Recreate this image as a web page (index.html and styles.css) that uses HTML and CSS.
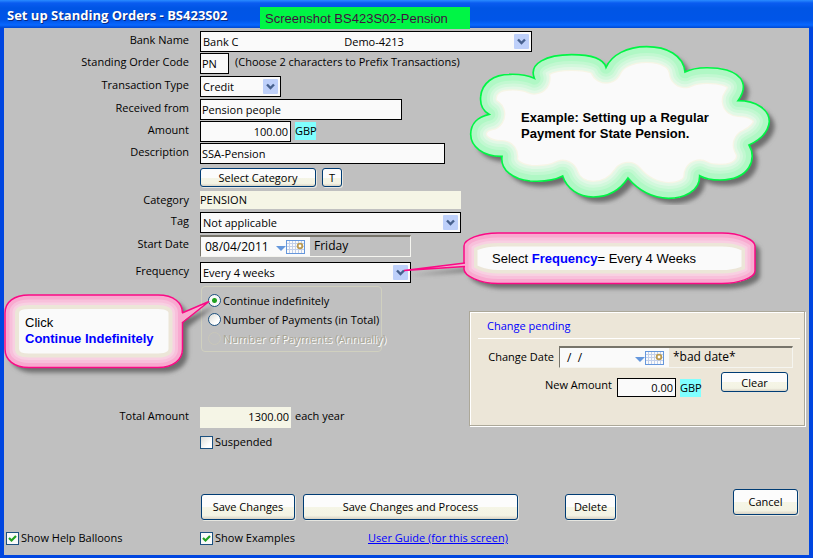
FILE: index.html
```html
<!DOCTYPE html>
<html lang="en">
<head>
<meta charset="utf-8">
<title>Set up Standing Orders</title>
<link rel="stylesheet" href="styles.css">
</head>
<body>
<svg class="defs" width="0" height="0" aria-hidden="true">
  <symbol id="chevron" viewBox="0 0 15 15">
    <rect width="15" height="15" rx="1" fill="#bed0fa"/>
    <path d="M4 5.500L7.500 9L11 5.500" fill="none" stroke="#47618e" stroke-width="2.400"/>
  </symbol>
  <symbol id="calendar" viewBox="0 0 30 14">
    <path d="M0 6h10L5 11z" fill="#6597dc"/>
    <rect x="10.500" y=".5" width="18" height="13" fill="#fafafa" stroke="#6597dc"/>
    <path d="M13.500 1v12M16.500 1v12M19.500 1v12M22.500 1v12M25.500 1v12M11 3.500h17M11 6.500h17M11 9.500h17" stroke="#c3d0ea"/>
    <circle cx="24" cy="6" r="2.300" fill="#fff" stroke="#bb9a50" stroke-width="1.800"/>
  </symbol>
</svg>
<div class="window">
  <header class="titlebar">
    <h1>Set up Standing Orders - BS423S02</h1>
    <span class="tag">Screenshot BS423S02-Pension</span>
  </header>

  <form class="form">
    <div class="row">
      <label for="bank">Bank Name</label>
      <span class="select bank"><select id="bank"><option>Bank C&nbsp;&nbsp;&nbsp;&nbsp;&nbsp;&nbsp;&nbsp;&nbsp;&nbsp;&nbsp;&nbsp;&nbsp;&nbsp;&nbsp;&nbsp;&nbsp;&nbsp;&nbsp;&nbsp;&nbsp;&nbsp;&nbsp;&nbsp;&nbsp;&nbsp;&nbsp;&nbsp;&nbsp;&nbsp;&nbsp;&nbsp;&nbsp;&nbsp;&nbsp;&nbsp;&nbsp;&nbsp;Demo-4213</option></select><svg><use href="#chevron"/></svg></span>
    </div>
    <div class="row roomy">
      <label for="code">Standing Order Code</label>
      <input class="box code" id="code" value="PN">
      <span class="note">(Choose 2 characters to Prefix Transactions)</span>
    </div>
    <div class="row roomy">
      <label for="type">Transaction Type</label>
      <span class="select type"><select id="type"><option>Credit</option></select><svg><use href="#chevron"/></svg></span>
    </div>
    <div class="row">
      <label for="from">Received from</label>
      <input class="box from" id="from" value="Pension people">
    </div>
    <div class="row">
      <label for="amount">Amount</label>
      <input class="box amount" id="amount" value="100.00">
      <span class="currency">GBP</span>
    </div>
    <div class="row">
      <label for="desc">Description</label>
      <input class="box desc" id="desc" value="SSA-Pension">
    </div>
    <div class="row category-buttons">
      <span></span>
      <button type="button" class="pick">Select Category</button>
      <button type="button" class="small">T</button>
    </div>
    <div class="row category-row">
      <label for="category">Category</label>
      <input class="readonly category" id="category" value="PENSION" readonly>
    </div>
    <div class="row roomy">
      <label for="tag">Tag</label>
      <span class="select tagsel"><select id="tag"><option>Not applicable</option></select><svg><use href="#chevron"/></svg></span>
    </div>
    <div class="row date-row">
      <label for="start">Start Date</label>
      <span class="date"><span class="picker"><input id="start" value="08/04/2011"><svg><use href="#calendar"/></svg></span><span class="day">Friday</span></span>
    </div>
    <div class="row roomy">
      <label for="freq">Frequency</label>
      <span class="select freq"><select id="freq"><option>Every 4 weeks</option></select><svg><use href="#chevron"/></svg></span>
    </div>

    <div class="lower">
      <div class="duration">
        <div class="group">
          <label><input type="radio" name="term" checked>Continue indefinitely</label>
          <label><input type="radio" name="term">Number of Payments (in Total)</label>
          <label class="off"><input type="radio" name="term" disabled>Number of Payments (Annually)</label>
        </div>
        <div class="row total">
          <label for="total">Total Amount</label>
          <input class="readonly amount" id="total" value="1300.00" readonly>
          <span class="each">each year</span>
        </div>
        <label class="check suspended"><input type="checkbox">Suspended</label>
      </div>
      <section class="pending">
        <h2>Change pending</h2>
        <div class="pending-date">
          <label for="change">Change Date</label>
          <span class="date"><span class="picker"><input id="change" value=" /  /"><svg><use href="#calendar"/></svg></span><span class="day">*bad date*</span></span>
        </div>
        <div class="pending-amount">
          <label for="newamount">New Amount</label>
          <input class="box" id="newamount" value="0.00">
          <span class="currency">GBP</span>
          <button type="button">Clear</button>
        </div>
      </section>
    </div>

    <div class="actions">
      <button type="button" class="save">Save Changes</button>
      <button type="button" class="process">Save Changes and Process</button>
      <button type="button" class="delete">Delete</button>
      <button type="button" class="cancel">Cancel</button>
    </div>
    <footer class="footer">
      <label class="check"><input type="checkbox" checked>Show Help Balloons</label>
      <label class="check"><input type="checkbox" checked>Show Examples</label>
      <a href="#guide">User Guide (for this screen)</a>
    </footer>
  </form>

  <aside class="callout cloud">
    <svg viewBox="30 30 960 495" aria-hidden="true">
      <defs>
        <path id="cloud" d="M253 145C235 100 290 74 365 74C420 74 460 85 468 112C485 75 530 50 590 50C650 50 700 75 705 126C740 108 800 112 830 120C880 135 895 170 864 212C920 212 958 240 958 275C955 305 930 330 897 345C922 385 900 450 810 450C780 450 765 446 749 437C750 485 700 505 655 505C600 503 560 475 534 444C510 480 475 501 430 501C385 501 350 475 338 438C310 453 270 455 240 453C190 448 150 420 156 379C100 380 62 350 62 313C62 280 85 260 117 253C95 240 90 220 92 200C95 160 130 133 180 133C210 132 235 137 253 145Z"/>
        <clipPath id="cloudclip"><use href="#cloud"/></clipPath>
        <filter id="blur3"><feGaussianBlur stdDeviation="6"/></filter>
      </defs>
      <use href="#cloud" x="16" y="16" fill="#6e6e6e" filter="url(#blur3)"/>
      <use href="#cloud" fill="#fafafa"/>
      <g clip-path="url(#cloudclip)" fill="none" stroke-linejoin="round">
        <use href="#cloud" stroke="#f6f5e6" stroke-width="98"/>
        <use href="#cloud" stroke="#e2f8e6" stroke-width="90"/>
        <use href="#cloud" stroke="#d2f8dc" stroke-width="74"/>
        <use href="#cloud" stroke="#c2f8d1" stroke-width="56"/>
        <use href="#cloud" stroke="#b0f8c5" stroke-width="38"/>
      </g>
      <use href="#cloud" fill="none" stroke="#00f545" stroke-width="5"/>
    </svg>
    <p><b>Example: Setting up a Regular<br>Payment for State Pension.</b></p>
  </aside>

  <aside class="callout frequency">
    <svg viewBox="400 228 366 68" aria-hidden="true">
      <defs>
        <path id="wide" d="M498 233H722C740 233 755 240 755 246V271C755 278 738 283.500 722 283.500H498C480 283.500 464 276 464 269V246C464 239 480 233 498 233Z"/>
        <path id="widetail" d="M465 263L404 270.500L465 266.500"/>
        <clipPath id="wideclip"><use href="#wide"/></clipPath>
        <filter id="blur1" x="-10%" y="-30%" width="120%" height="160%"><feGaussianBlur stdDeviation="2"/></filter>
      </defs>
      <g fill="#6e6e6e" filter="url(#blur1)"><use href="#wide" x="5" y="5"/><use href="#widetail" x="5" y="5"/></g>
      <use href="#wide" fill="#fafafa"/>
      <g clip-path="url(#wideclip)" fill="none" stroke-linejoin="round">
        <use href="#wide" stroke="#ece6d8" stroke-width="27"/>
        <use href="#wide" stroke="#f8d0e2" stroke-width="20"/>
        <use href="#wide" stroke="#f8c0db" stroke-width="15"/>
        <use href="#wide" stroke="#f8aad0" stroke-width="9"/>
      </g>
      <use href="#wide" fill="none" stroke="#fa0a85" stroke-width="1.500"/>
      <use href="#widetail" fill="#f8aad0" stroke="#fa0a85" stroke-width="1.500"/>
    </svg>
    <p>Select <b>Frequency</b>= Every 4 Weeks</p>
  </aside>

  <aside class="callout indefinite">
    <svg viewBox="0 290 214 92" aria-hidden="true">
      <defs>
        <path id="tall" d="M29 295H158C174 295 182.500 303 182.500 313V349C182.500 360 173 367.500 158 367.500H29C14 367.500 5 360 5 349V313C5 302 14 295 29 295Z"/>
        <path id="talltail" d="M182 313L209 301.500L182 323"/>
        <clipPath id="tallclip"><use href="#tall"/></clipPath>
      </defs>
      <g fill="#6e6e6e" filter="url(#blur1)"><use href="#tall" x="5" y="5"/><use href="#talltail" x="5" y="5"/></g>
      <use href="#tall" fill="#fafafa"/>
      <g clip-path="url(#tallclip)" fill="none" stroke-linejoin="round">
        <use href="#tall" stroke="#ece6d8" stroke-width="28"/>
        <use href="#tall" stroke="#f8d0e2" stroke-width="20"/>
        <use href="#tall" stroke="#f8c0db" stroke-width="15"/>
        <use href="#tall" stroke="#f8aad0" stroke-width="9"/>
      </g>
      <use href="#tall" fill="none" stroke="#fa0a85" stroke-width="1.500"/>
      <path d="M181 313L209 301.500L181 323z" fill="#f8aad0"/>
      <use href="#talltail" fill="none" stroke="#fa0a85" stroke-width="1.500"/>
    </svg>
    <p>Click<br><b>Continue Indefinitely</b></p>
  </aside>
</div>
</body>
</html>
```
FILE: styles.css
```css
* { box-sizing: border-box; }
body {
  margin: 0;
  font: 11px/18px "Open Sans", "Noto Sans", sans-serif;
  color: #000;
}
.defs { position: absolute; }
input, select, button { font: inherit; color: inherit; margin: 0; border-radius: 0; }
.window {
  position: relative;
  display: flex;
  flex-direction: column;
  min-height: 100vh;
  background: #c0c0c0;
  border: solid #0046e0;
  border-width: 0 4px 3px;
}
.titlebar {
  display: flex;
  gap: 34px;
  height: 28px;
  margin: 0 -4px;
  padding: 0 7px;
  background: linear-gradient(#2a8cff 0, #0a5cf0 3px, #0055e5 8px, #0055e8 20px, #0867ff 25px, #0048d0 28px);
}
h1 {
  margin: 0;
  width: 219px;
  white-space: nowrap;
  font-size: 13px;
  line-height: 30px;
  color: #fff;
  text-shadow: 1px 1px #0a2a80;
}
.tag {
  height: 22px;
  margin-top: 7px;
  width: 210px;
  padding-left: 5px;
  font: 13px/24px "Liberation Sans", sans-serif;
  color: #401040;
  background: #00f545;
}
.form { display: flex; flex-direction: column; flex: 1; padding-top: 3px; }
.row { display: flex; align-items: flex-start; margin-bottom: 1px; }
.roomy { margin-bottom: 2px; }
.row > :first-child { flex: 0 0 185px; margin-right: 11px; text-align: right; }

.box, .select select {
  height: 21px;
  border: 1px solid #000;
  background: #fafafa;
}
.box { padding: 0 0 1px 1px; }
.select { position: relative; display: block; }
.select select { appearance: none; width: 100%; padding: 0 2px; display: block; }
.select svg { position: absolute; top: 3px; right: 3px; width: 15px; height: 15px; pointer-events: none; }
.bank { width: 332px; }
.code { width: 29px; }
.type { width: 81px; }
.from { width: 202px; }
.amount { width: 91px; text-align: right; padding-right: 2px; }
.desc { width: 245px; }
.tagsel { width: 261px; }
.freq { width: 211px; }
.note { margin-left: 6px; }
.currency { height: 18px; margin: 1px 0 0 4px; width: 21px; background: #80ffff; white-space: nowrap; }
.readonly { height: 18px; border: 0; background: #f5f5e6; }
.category { width: 261px; padding: 0; }
.category-row { margin-bottom: 3px; }
.each { margin-left: 4px; }

button {
  height: 26px;
  padding: 0;
  border: 1px solid #003c74;
  border-radius: 3px;
  background: linear-gradient(#fcfcfc 50%, #f5f5e6 51%, #f3f3e4 85%, #d8d2c4);
  box-shadow: 1px 1px #e6e6e0;
}
.category-buttons { margin: 3px 0 4px; }
.category-buttons button { height: 19px; line-height: 17px; }
.pick { width: 116px; }
.small { width: 20px; margin-left: 6px; }

.date {
  display: flex;
  height: 22px;
  border: 1px solid #f5f5f0;
  border-top: 2px solid #77746a;
  border-left-color: #77746a;
}
.date-row .date { width: 211px; }
.date-row { margin-bottom: 5px; }
.picker { display: flex; align-items: center; width: 109px; background: #fafafa; }
.picker input { width: 75px; border: 0; padding: 0 4px; background: transparent; font-size: 12px; }
.picker svg { width: 30px; height: 14px; }
.day { padding-left: 4px; font-size: 12px; }

.lower { display: flex; align-items: flex-start; margin-top: 1px; }
.duration { flex: 0 0 465px; }
.group {
  width: 181px;
  height: 66px;
  margin-left: 197px;
  padding: 4px 0 0 6px;
  border: 1px solid #d0d0bf;
  border-radius: 4px;
}
.group label { display: flex; align-items: center; gap: 2px; height: 19px; white-space: nowrap; }
.group label.off { color: #a8a594; text-shadow: 1px 1px #fff; }
input[type="radio"], input[type="checkbox"] {
  appearance: none;
  flex: none;
  width: 13px;
  height: 13px;
  border: 1px solid #1c5180;
  background: linear-gradient(135deg, #dcdcd6, #fff 70%);
}
input[type="radio"] { border-radius: 50%; }
input[type="radio"]:checked { background: radial-gradient(circle, #21a121 0 2px, #f8f8f8 3px); }
input[type="radio"]:disabled { border-color: #c9c7ba; background: none; }
input[type="checkbox"]:checked {
  background: #fafafa url("data:image/svg+xml,%3Csvg xmlns='http://www.w3.org/2000/svg' viewBox='0 0 11 11'%3E%3Cpath d='M2 5l2.500 2.500L9 3' fill='none' stroke='%2321a121' stroke-width='2.200'/%3E%3C/svg%3E");
}
.total { margin: 55px 0 5px; }
.total .readonly { height: 21px; padding-bottom: 3px; }
.check { display: flex; align-items: center; gap: 2px; white-space: nowrap; }
.suspended { margin-left: 196px; }

.pending {
  flex: 1;
  height: 115px;
  margin: 25px 4px 0 0;
  padding: 5px 4px 0 8px;
  background: #ece6d8;
  border: 1px solid #aca899;
  box-shadow: inset 1px 1px #fff, 1px 1px #fff;
}
h2 { margin: 0 0 7px; padding: 0 0 3px 9px; font-size: 11px; font-weight: 400; color: #00f; border-bottom: 1px solid #fff; }
.pending-date { display: flex; gap: 5px; align-items: center; padding-right: 7px; }
.pending-date label, .pending-amount label { flex: 0 0 76px; text-align: right; white-space: nowrap; }
.pending-date .date { flex: 1; }
.pending-amount { display: flex; align-items: flex-start; margin-top: 4px; padding-right: 12px; }
.pending-amount label { flex-basis: 134px; margin: 4px 5px 0 0; }
.pending-amount .box { width: 59px; height: 19px; margin-top: 6px; padding-right: 2px; text-align: right; }
.pending-amount .currency { margin-top: 7px; }
.pending-amount button { width: 67px; height: 20px; margin-left: auto; line-height: 17px; }

.actions { display: flex; align-items: flex-end; margin: 38px 11px 0 197px; }
.save { width: 94px; }
.process { width: 215px; margin-left: 8px; }
.delete { width: 51px; margin-left: 47px; }
.cancel { width: 65px; margin: 0 0 5px auto; }
.footer { display: grid; grid-template-columns: 194px 168px 1fr; padding: 9px 0 0 2px; }
.footer a { color: #00f; }

.callout { position: absolute; font: 13px/16px "Liberation Sans", sans-serif; pointer-events: none; }
.callout svg { display: block; width: 100%; height: 100%; }
.callout p { position: absolute; margin: 0; white-space: nowrap; }
.callout:not(.cloud) b { color: #00f; }
.cloud { left: 456px; top: 40px; width: 320px; height: 165px; }
.cloud p { left: 61px; top: 70px; }
.frequency { left: 396px; top: 228px; width: 366px; height: 68px; }
.frequency p { left: 92px; top: 23px; }
.indefinite { left: -4px; top: 290px; width: 214px; height: 92px; }
.indefinite p { left: 25px; top: 25px; }
```
